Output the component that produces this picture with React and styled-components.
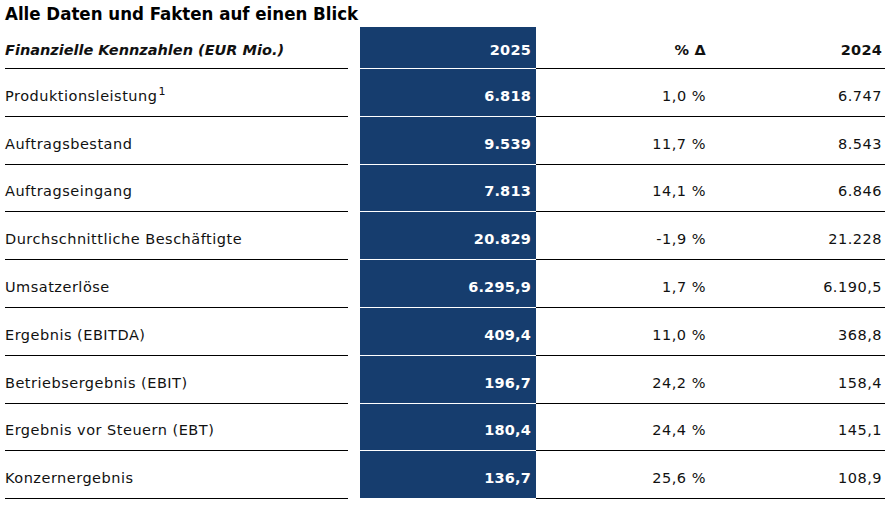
import React from 'react'
import styled, { createGlobalStyle } from 'styled-components'

const Global = createGlobalStyle`
  body {
    margin: 0;
    background: #fff;
    font-family: "DejaVu Sans", "Liberation Sans", sans-serif;
    color: #111;
  }
`

const Page = styled.div`
  width: 895px;
  height: 510px;
  padding-left: 5px;
  box-sizing: border-box;
`

const Title = styled.h1`
  margin: 0;
  height: 27px;
  line-height: 28px;
  font-family: "DejaVu Sans Condensed", "DejaVu Sans", sans-serif;
  font-size: 18.5px;
  font-weight: bold;
  color: #000;
`

const Table = styled.div`
  display: grid;
  grid-template-columns: 343px 12px 176px 170px 179px;
`

const Row = styled.div`
  display: contents;
`

const Cell = styled.div`
  height: ${p => (p.$head ? '42px' : '47.8px')};
  box-sizing: border-box;
  display: flex;
  align-items: center;
  justify-content: ${p => (p.$left ? 'flex-start' : 'flex-end')};
  padding-top: ${p => (p.$head ? '5px' : '7px')};
  padding-right: ${p => (p.$blue ? '5px' : p.$last ? '3px' : '0')};
  border-bottom: 1px solid ${p => (p.$blue ? '#fff' : '#000')};
  background: ${p => (p.$blue ? '#163d6e' : 'transparent')};
  color: ${p => (p.$blue ? '#fff' : '#111')};
  font-size: 14.5px;
  letter-spacing: ${p => (p.$italic ? '0' : p.$bold || p.$blue ? '0.2px' : '0.5px')};
  font-weight: ${p => (p.$bold || p.$blue ? 'bold' : 'normal')};
  font-style: ${p => (p.$italic ? 'italic' : 'normal')};
  white-space: nowrap;
`

const Gap = styled.div`
  height: ${p => (p.$head ? '42px' : '47.8px')};
`

const Sup = styled.sup`
  font-size: 11px;
  line-height: 0;
  position: relative;
  top: -4px;
  margin-left: 1px;
`

const rows = [
  ['Produktionsleistung', '6.818', '1,0', '6.747', true],
  ['Auftragsbestand', '9.539', '11,7', '8.543'],
  ['Auftragseingang', '7.813', '14,1', '6.846'],
  ['Durchschnittliche Beschäftigte', '20.829', '-1,9', '21.228'],
  ['Umsatzerlöse', '6.295,9', '1,7', '6.190,5'],
  ['Ergebnis (EBITDA)', '409,4', '11,0', '368,8'],
  ['Betriebsergebnis (EBIT)', '196,7', '24,2', '158,4'],
  ['Ergebnis vor Steuern (EBT)', '180,4', '24,4', '145,1'],
  ['Konzernergebnis', '136,7', '25,6', '108,9'],
]

export default function App() {
  return (
    <Page>
      <Global />
      <Title>Alle Daten und Fakten auf einen Blick</Title>
      <Table>
        <Row>
          <Cell $head $left $bold $italic>Finanzielle Kennzahlen (EUR Mio.)</Cell>
          <Gap $head />
          <Cell $head $blue>2025</Cell>
          <Cell $head $bold>% Δ</Cell>
          <Cell $head $bold $last>2024</Cell>
        </Row>
        {rows.map(([label, cur, pct, prev, note]) => (
          <Row key={label}>
            <Cell $left>
              {label}
              {note && <Sup>1</Sup>}
            </Cell>
            <Gap />
            <Cell $blue>{cur}</Cell>
            <Cell>{pct} %</Cell>
            <Cell $last>{prev}</Cell>
          </Row>
        ))}
      </Table>
    </Page>
  )
}
